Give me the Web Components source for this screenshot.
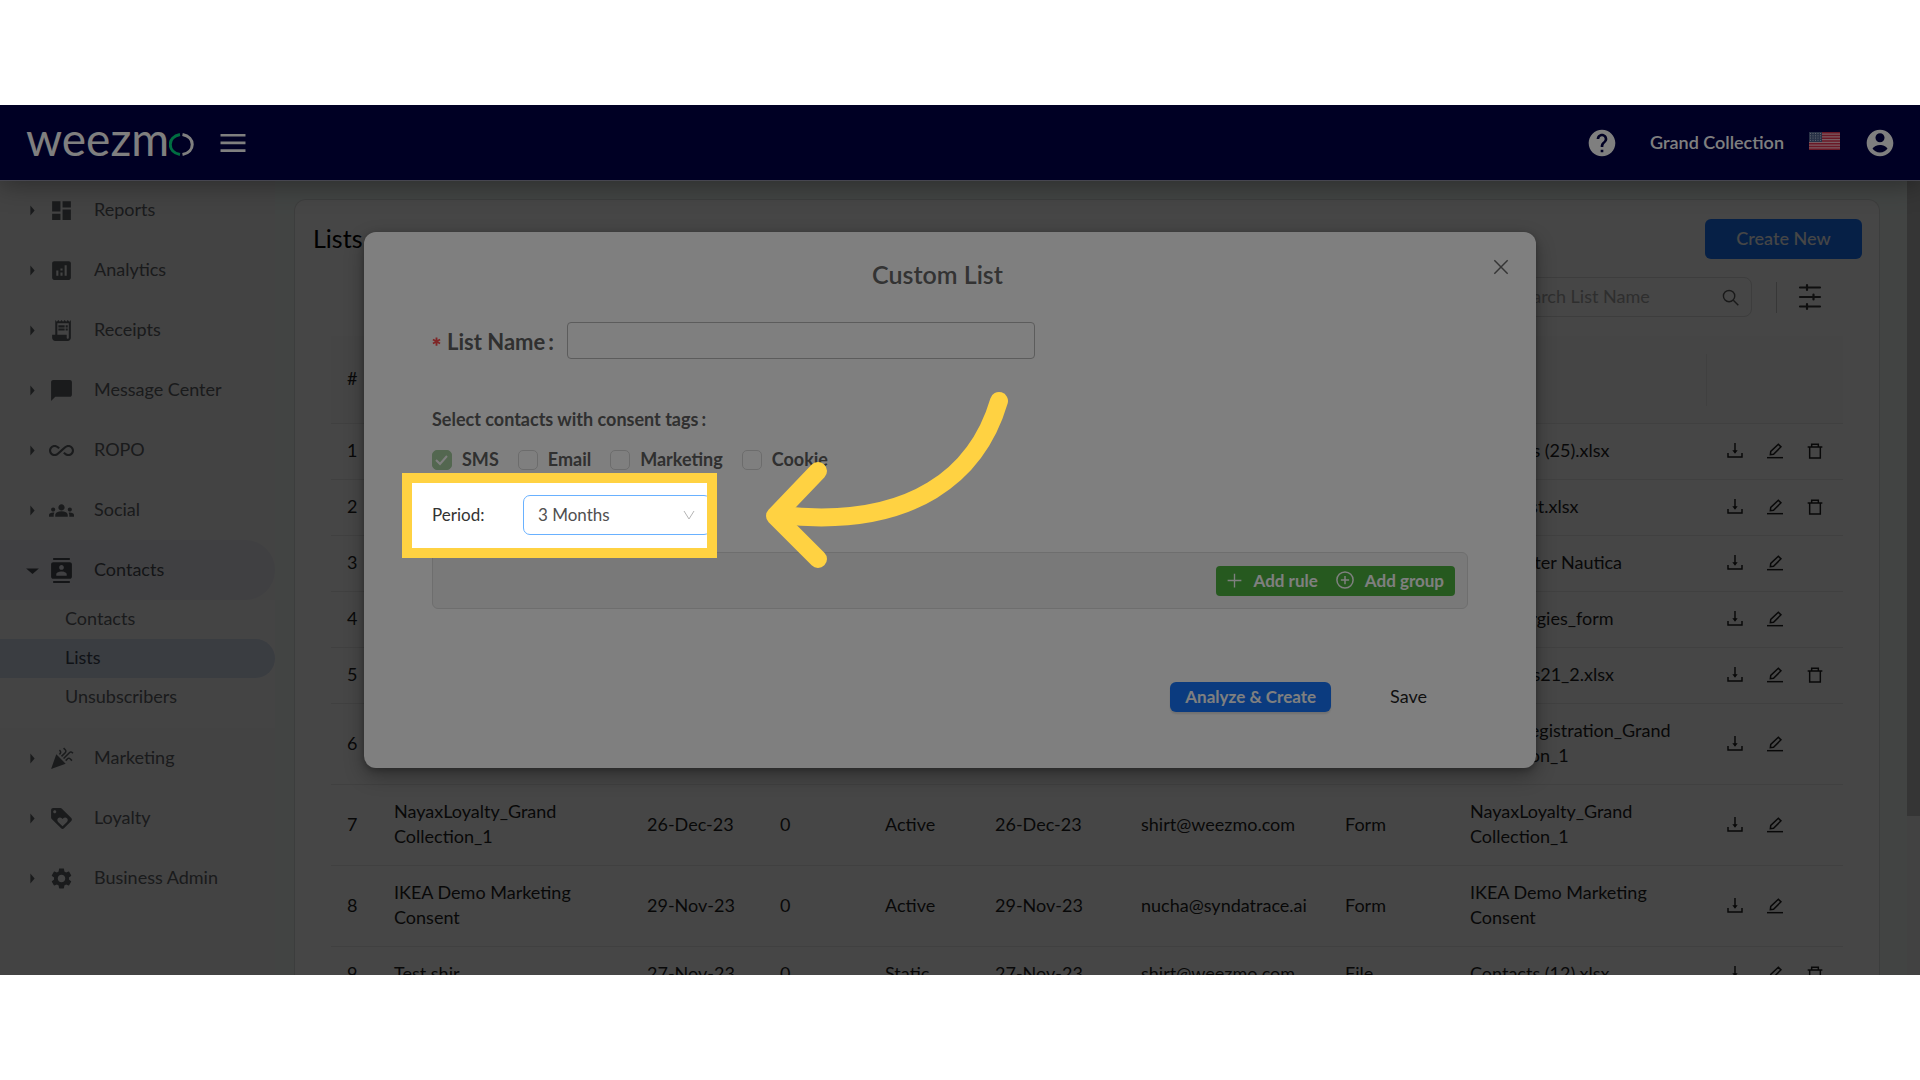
<!DOCTYPE html>
<html lang="en">
<head>
<meta charset="utf-8">
<title>weezmo – Lists</title>
<style>
  html, body { margin: 0; height: 100%; background: #fff; }
  body {
    box-sizing: border-box; padding-block: 105px; overflow: hidden;
    font-family: Lato, "Liberation Sans", sans-serif; font-size: 18px; line-height: 25px; color: #1f1f1f;
  }
</style>
</head>
<body>
<weezmo-app></weezmo-app>

<script>
const ICONS = {
  dashboard: '<path d="M3 13h8V3H3v10zm0 8h8v-6H3v6zm10 0h8V11h-8v10zm0-18v6h8V3h-8z"/>',
  analytics: '<path d="M19 3H5c-1.1 0-2 .9-2 2v14c0 1.1.9 2 2 2h14c1.1 0 2-.9 2-2V5c0-1.1-.9-2-2-2zM9 17H7v-5h2v5zm4 0h-2v-3h2v3zm0-5h-2v-2h2v2zm4 5h-2V7h2v10z"/>',
  receipt: '<path d="M19.5 3.5L18 2l-1.5 1.5L15 2l-1.5 1.5L12 2l-1.5 1.5L9 2 7.5 3.5 6 2v14H3v3c0 1.66 1.34 3 3 3h12c1.66 0 3-1.34 3-3V2l-1.5 1.5zM19 19c0 .55-.45 1-1 1s-1-.45-1-1v-3H8V5h11v14z"/><path d="M9 7h6v2H9zM16 7h2v2h-2zM9 10h6v2H9zM16 10h2v2h-2z"/>',
  chat: '<path d="M20 2H4c-1.1 0-2 .9-2 2v18l4-4h14c1.1 0 2-.9 2-2V4c0-1.1-.9-2-2-2z"/>',
  infinity: '<path d="M18.6 6.62c-1.44 0-2.8.56-3.77 1.53L12 10.66 10.48 12h.01L7.8 14.39c-.64.64-1.49.99-2.4.99-1.87 0-3.39-1.51-3.39-3.38S3.53 8.62 5.4 8.62c.91 0 1.76.35 2.44 1.03l1.13 1 1.51-1.34L9.22 8.2C8.2 7.18 6.84 6.62 5.4 6.62 2.42 6.62 0 9.04 0 12s2.42 5.38 5.4 5.38c1.44 0 2.8-.56 3.77-1.53l2.83-2.5.01.01L13.52 12h-.01l2.69-2.39c.64-.64 1.49-.99 2.4-.99 1.87 0 3.39 1.51 3.39 3.38s-1.52 3.38-3.39 3.38c-.9 0-1.76-.35-2.44-1.03l-1.14-1.01-1.51 1.34 1.27 1.12c1.02 1.01 2.37 1.57 3.82 1.57 2.98 0 5.4-2.41 5.4-5.38s-2.42-5.37-5.4-5.37z"/>',
  groups: '<path d="M12 12.75c1.63 0 3.07.39 4.24.9 1.08.48 1.76 1.56 1.76 2.73V18H6v-1.61c0-1.18.68-2.26 1.76-2.73 1.17-.52 2.61-.91 4.24-.91zM4 13c1.1 0 2-.9 2-2s-.9-2-2-2-2 .9-2 2 .9 2 2 2zm1.13 1.1c-.37-.06-.74-.1-1.13-.1-.99 0-1.93.21-2.78.58C.48 14.9 0 15.62 0 16.43V18h4.5v-1.61c0-.83.23-1.61.63-2.29zM20 13c1.1 0 2-.9 2-2s-.9-2-2-2-2 .9-2 2 .9 2 2 2zm4 3.43c0-.81-.48-1.53-1.22-1.85-.85-.37-1.79-.58-2.78-.58-.39 0-.76.04-1.13.1.4.68.63 1.46.63 2.29V18H24v-1.57zM12 6c1.66 0 3 1.34 3 3s-1.34 3-3 3-3-1.34-3-3 1.34-3 3-3z"/>',
  contacts: '<path d="M20 0H4v2h16V0zM4 24h16v-2H4v2zM20 4H4c-1.1 0-2 .9-2 2v12c0 1.1.9 2 2 2h16c1.1 0 2-.9 2-2V6c0-1.1-.9-2-2-2zm-8 2.75c1.24 0 2.25 1.01 2.25 2.25s-1.01 2.25-2.25 2.25S9.75 10.24 9.75 9 10.76 6.75 12 6.75zM17 17H7v-1.5c0-1.67 3.33-2.5 5-2.5s5 .83 5 2.5V17z"/>',
  celebration: '<path d="M2 22l14-5-9-9zM14.53 12.53l5.59-5.59c.49-.49 1.28-.49 1.77 0l.59.59 1.06-1.06-.59-.59c-1.07-1.07-2.82-1.07-3.89 0l-5.59 5.59 1.06 1.06zM10.06 6.88l-.59.59 1.06 1.06.59-.59c1.07-1.07 1.07-2.82 0-3.89l-.59-.59-1.06 1.07.59.59c.48.48.48 1.28 0 1.76zM17.06 11.88l-1.59 1.59 1.06 1.06 1.59-1.59c.49-.49 1.28-.49 1.77 0l1.61 1.61 1.06-1.06-1.61-1.61c-1.08-1.07-2.82-1.07-3.89 0zM15.06 5.88l-3.59 3.59 1.06 1.06 3.59-3.59c1.07-1.07 1.07-2.82 0-3.89l-1.59-1.59-1.06 1.06 1.59 1.59c.48.49.48 1.29 0 1.77z"/>',
  loyalty: '<path d="M21.41 11.58l-9-9C12.05 2.22 11.55 2 11 2H4c-1.1 0-2 .9-2 2v7c0 .55.22 1.05.59 1.42l9 9c.36.36.86.58 1.41.58.55 0 1.05-.22 1.41-.59l7-7c.37-.36.59-.86.59-1.41 0-.55-.23-1.06-.59-1.42zM5.5 7C4.67 7 4 6.33 4 5.5S4.67 4 5.5 4 7 4.67 7 5.5 6.33 7 5.5 7zm11.77 8.27L13 19.54l-4.27-4.27C8.28 14.81 8 14.19 8 13.5c0-1.38 1.12-2.5 2.5-2.5.69 0 1.32.28 1.77.74l.73.72.73-.73c.45-.45 1.08-.73 1.77-.73 1.38 0 2.5 1.12 2.5 2.5 0 .69-.28 1.32-.73 1.77z"/>',
  settings: '<path d="M19.14 12.94c.04-.3.06-.61.06-.94 0-.32-.02-.64-.07-.94l2.03-1.58c.18-.14.23-.41.12-.61l-1.92-3.32c-.12-.22-.37-.29-.59-.22l-2.39.96c-.5-.38-1.03-.7-1.62-.94l-.36-2.54c-.04-.24-.24-.41-.48-.41h-3.84c-.24 0-.43.17-.47.41l-.36 2.54c-.59.24-1.13.57-1.62.94l-2.39-.96c-.22-.08-.47 0-.59.22L2.74 8.87c-.12.21-.08.47.12.61l2.03 1.58c-.05.3-.09.63-.09.94s.02.64.07.94l-2.03 1.58c-.18.14-.23.41-.12.61l1.92 3.32c.12.22.37.29.59.22l2.39-.96c.5.38 1.03.7 1.62.94l.36 2.54c.05.24.24.41.48.41h3.84c.24 0 .44-.17.47-.41l.36-2.54c.59-.24 1.13-.56 1.62-.94l2.39.96c.22.08.47 0 .59-.22l1.92-3.32c.12-.22.07-.47-.12-.61l-2.01-1.58zM12 15.6c-1.98 0-3.6-1.62-3.6-3.6s1.62-3.6 3.6-3.6 3.6 1.62 3.6 3.6-1.62 3.6-3.6 3.6z"/>',
  help: '<path d="M12 2C6.48 2 2 6.48 2 12s4.48 10 10 10 10-4.48 10-10S17.52 2 12 2zm1 17h-2v-2h2v2zm2.07-7.75l-.9.92C13.45 12.9 13 13.5 13 15h-2v-.5c0-1.1.45-2.1 1.17-2.83l1.24-1.26c.37-.36.59-.86.59-1.41 0-1.1-.9-2-2-2s-2 .9-2 2H8c0-2.21 1.79-4 4-4s4 1.79 4 4c0 .88-.36 1.68-.93 2.25z"/>',
  account: '<path d="M12 2C6.48 2 2 6.48 2 12s4.48 10 10 10 10-4.48 10-10S17.52 2 12 2zm0 2.6c1.9 0 3.4 1.5 3.4 3.4s-1.5 3.4-3.4 3.4S8.6 9.9 8.6 8s1.5-3.4 3.4-3.4zm0 14.6c-2.5 0-4.700-1.300-5.600-3 .800-1.500 3.400-2.700 5.600-2.700s4.800 1.200 5.600 2.700c-.900 1.700-3.100 3-5.600 3z"/>',
  menu: '<path d="M1.300 4.200h21.400v2.300H1.300zM1.300 10.800h21.400v2.300H1.300zM1.300 17.400h21.400v2.300H1.300z"/>',
  caret: '<path d="M9 5l6 7-6 7z"/>',
  caretDown: '<path d="M3 9h18l-9 8z"/>',
  download: '<g fill="none" stroke="currentColor" stroke-width="2.200"><path d="M1.500 15v6h21v-6"/><path d="M12 0v14"/></g><path d="M8 11h8l-4 5z"/>',
  edit: '<g fill="none" stroke="currentColor" stroke-width="2.200"><path d="M0 22h24"/><path d="M5 17.500l.600-4.800L17 1.800l4 4-11.200 11z"/></g>',
  trash: '<g fill="none" stroke="currentColor" stroke-width="2.200"><path d="M1 6h22M7 5.500V2h10v3.500M4 6v16.500h16V6"/></g>',
  search: '<g fill="none" stroke="currentColor" stroke-width="2"><circle cx="10" cy="10" r="8"/><path d="M16 16l7 7"/></g>',
  filter: '<g fill="none" stroke="currentColor" stroke-width="2.200" stroke-linecap="round"><path d="M2 2.500h20M2 12h20M2 21.500h20"/><path d="M9 0v5M15.500 9.500v5M9 19v5"/></g>',
  close: '<path fill="none" stroke="currentColor" stroke-width="2.200" d="M2 2l20 20M22 2L2 22"/>',
  plus: '<path fill="none" stroke="currentColor" stroke-width="2.200" d="M12 1v22M1 12h22"/>',
  plusCircle: '<g fill="none" stroke="currentColor" stroke-width="2"><circle cx="12" cy="12" r="10.800"/><path d="M12 6.500v11M6.500 12h11"/></g>',
  chevron: '<path fill="none" stroke="currentColor" stroke-width="2" d="M2 4l10 16L22 4"/>',
  asterisk: '<path fill="none" stroke="currentColor" stroke-width="5" d="M12 1v22M2.500 6.500l19 11M21.500 6.500l-19 11"/>'
};

const define = (name, html, init) => customElements.define(name, class extends HTMLElement {
  constructor() {
    super();
    const root = this.attachShadow({ mode: 'open' });
    const t = document.createElement('template');
    t.innerHTML = html;
    root.append(t.content.cloneNode(true));
  }
  connectedCallback() { if (init) init(this, this.shadowRoot); }
});

define('app-icon', `
<style>
  :host { display: inline-flex; flex: none; width: var(--size, 24px); height: var(--size, 24px); }
  svg { width: 100%; height: 100%; display: block; fill: currentColor; overflow: visible; }
</style>
<svg viewBox="0 0 24 24" aria-hidden="true"></svg>`,
(el, root) => { root.querySelector('svg').innerHTML = ICONS[el.getAttribute('name')] || ''; });

define('weezmo-logo', `
<style>
  :host { display: flex; align-items: baseline; color: #fff; font-size: 46px; line-height: 44px; }
  svg { width: 25px; height: 23px; flex: none; }
</style>
<span>weezm</span><svg viewBox="0 0 25 23" fill="none" stroke-width="3" aria-label="o" role="img">
  <path stroke="#00dc82" d="M11 1.500C-2 4 -2 19 11 21.500"/>
  <path stroke="#fff" d="M13.500 1.500C26.500 4 26.500 19 13.500 21.500"/>
</svg>`);

define('us-flag', `
<style>:host { display: block; width: 31px; height: 18px; } svg { display: block; width: 100%; height: 100%; }</style>
<svg viewBox="0 0 31 18" role="img" aria-label="English (US)">
  <rect width="31" height="18" fill="#f3b9c4"/>
  <path stroke="#d5304c" stroke-width="1.400" d="M0 .7h31M0 3.460h31M0 6.230h31M0 9h31M0 11.770h31M0 14.540h31M0 17.300h31"/>
  <rect width="13" height="10" fill="#51648e"/>
  <path stroke="#c5cde0" stroke-width="1" stroke-dasharray="1 1.500" d="M1 1.500h12M1 3.800h12M1 6.100h12M1 8.400h12"/>
</svg>`);

define('app-header', `
<style>
  :host { display: flex; align-items: center; box-sizing: border-box; height: 76px; padding: 0 24px 0 26px;
    background: #000048; color: #fff; border-bottom: 1px solid #8c8ca0; box-shadow: 0 4px 24px rgba(0,0,0,.35); }
  button { display: flex; padding: 0; border: 0; background: none; color: inherit; }
  weezmo-logo { margin: 0 25px 8px 0; }
  .menu { --size: 28px; }
  .right { display: flex; align-items: center; margin-left: auto; }
  .help, .user { --size: 32px; }
  .name { font-weight: 600; margin: 0 25px 0 32px; }
  us-flag { margin: 0 24px 4px 0; }
</style>
<weezmo-logo></weezmo-logo>
<button class="menu" aria-label="Toggle menu"><app-icon name="menu"></app-icon></button>
<div class="right">
  <button class="help" aria-label="Help"><app-icon name="help"></app-icon></button>
  <span class="name">Grand Collection</span>
  <us-flag></us-flag>
  <button class="user" aria-label="Account"><app-icon name="account"></app-icon></button>
</div>`);

define('nav-item', `
<style>
  :host { display: block; color: #5f6368; }
  a { display: flex; align-items: center; height: 60px; padding-left: 24px; color: inherit; text-decoration: none; border-radius: 0 30px 30px 0; }
  :host([open]) a { background: #e9ebf2; color: #4c4f54; }
  .arrow { --size: 17px; margin-right: 8px; }
  .icon { --size: 25px; margin-right: 20px; }
  .text { padding-bottom: 2px; }
</style>
<a href="#"><app-icon class="arrow"></app-icon><app-icon class="icon"></app-icon><span class="text"><slot></slot></span></a>`,
(el, root) => {
  const set = (sel, name) => {
    const i = document.createElement('app-icon');
    i.className = sel; i.setAttribute('name', name);
    root.querySelector('.' + sel).replaceWith(i);
  };
  set('arrow', el.hasAttribute('open') ? 'caretDown' : 'caret');
  set('icon', el.getAttribute('icon'));
});

define('nav-subitem', `
<style>
  :host { display: block; color: #5f6368; }
  a { display: block; line-height: 37px; padding: 0 0 2px 65px; color: inherit; text-decoration: none; border-radius: 0 20px 20px 0; }
  :host([current]) a { background: #d3deef; color: #3c4654; }
</style>
<a href="#"><slot></slot></a>`);

define('side-nav', `
<style>
  :host { display: block; flex: none; width: 275px; background: #f5f5f5; }
  .sub { background: #fafafa; padding-bottom: 11px; }
</style>
<nav>
  <nav-item icon="dashboard">Reports</nav-item>
  <nav-item icon="analytics">Analytics</nav-item>
  <nav-item icon="receipt">Receipts</nav-item>
  <nav-item icon="chat">Message Center</nav-item>
  <nav-item icon="infinity">ROPO</nav-item>
  <nav-item icon="groups">Social</nav-item>
  <nav-item icon="contacts" open>Contacts</nav-item>
  <div class="sub">
    <nav-subitem>Contacts</nav-subitem>
    <nav-subitem current>Lists</nav-subitem>
    <nav-subitem>Unsubscribers</nav-subitem>
  </div>
  <nav-item icon="celebration">Marketing</nav-item>
  <nav-item icon="loyalty">Loyalty</nav-item>
  <nav-item icon="settings">Business Admin</nav-item>
</nav>`);

const ROWS = [
  ['1', '', '', '', '', '', '', '', 'Contacts (25).xlsx', true],
  ['2', '', '', '', '', '', '', '', 'Guest list.xlsx', true],
  ['3', '', '', '', '', '', '', '', 'Newsletter Nautica', false],
  ['4', '', '', '', '', '', '', '', 'Pet Allergies_form', false],
  ['5', '', '', '', '', '', '', '', 'Contacts21_2.xlsx', true],
  ['6', '', '', '', '', '', '', '', 'NayaxRegistration_Grand Collection_1', false],
  ['7', 'NayaxLoyalty_Grand Collection_1', '26-Dec-23', '0', 'Active', '26-Dec-23', 'shirt@weezmo.com', 'Form', 'NayaxLoyalty_Grand Collection_1', false],
  ['8', 'IKEA Demo Marketing Consent', '29-Nov-23', '0', 'Active', '29-Nov-23', 'nucha@syndatrace.ai', 'Form', 'IKEA Demo Marketing Consent', false],
  ['9', 'Test shir', '27-Nov-23', '0', 'Static', '27-Nov-23', 'shirt@weezmo.com', 'File', 'Contacts (12).xlsx', true]
];

define('lists-table', `
<style>
  :host { display: block; }
  table { width: 100%; table-layout: fixed; border-collapse: separate; border-spacing: 0; }
  th, td { text-align: left; padding: 14px 16px 16px; border-bottom: 1px solid #ebebeb; font-weight: 400; }
  th { height: 57px; background: #fbfbfb; }
  th:first-child, td:first-child { padding-inline: 16px 4px; }
  th.file { background: linear-gradient(#ececec, #ececec) right center / 1px 52px no-repeat #fbfbfb; }
  .acts { display: flex; gap: 24px; padding: 5px 0 0 4px; height: 20px; --size: 16px; }
  button { display: flex; padding: 0; border: 0; background: none; color: #1f1f1f; }
</style>
<table>
  <colgroup><col style="width:47px"><col><col style="width:133px"><col style="width:105px"><col style="width:110px"><col style="width:146px"><col style="width:204px"><col style="width:125px"><col><col style="width:136px"></colgroup>
  <thead><tr><th>#</th><th></th><th></th><th></th><th></th><th></th><th></th><th></th><th class="file"></th><th></th></tr></thead>
  <tbody></tbody>
</table>`,
(el, root) => {
  const act = (label, icon) => `<button aria-label="${label}"><app-icon name="${icon}"></app-icon></button>`;
  root.querySelector('tbody').innerHTML = ROWS.map(r =>
    '<tr>' + r.slice(0, 9).map(c => `<td>${c}</td>`).join('') +
    `<td><div class="acts">${act('Download', 'download')}${act('Edit', 'edit')}${r[9] ? act('Delete', 'trash') : ''}</div></td></tr>`).join('');
});

define('lists-panel', `
<style>
  :host { display: block; box-sizing: border-box; background: #fff; border: 1px solid #dcdfde; border-bottom: 0; border-radius: 12px 12px 0 0; padding: 19px 17px 0 18px; }
  .head { display: flex; justify-content: space-between; align-items: center; }
  h1 { margin: 0; padding-bottom: 2px; font-size: 25px; line-height: 32px; font-weight: 400; color: #000; }
  .create { width: 157px; height: 40px; padding: 0 0 2px; border: 0; border-radius: 6px; background: #1677ff; color: #fff; font: inherit; font-weight: 500; }
  .tools { display: flex; align-items: center; justify-content: flex-end; margin: 18px 40px 19px 0; }
  .search { display: flex; align-items: center; box-sizing: border-box; width: 256px; height: 40px; padding: 0 12px 0 16px; border: 1px solid #dedede; border-radius: 8px; }
  input { flex: 1; min-width: 0; border: 0; padding: 0 0 2px; background: none; font: inherit; color: inherit; outline: 0; }
  input::placeholder { color: #aaa; opacity: 1; }
  .search app-icon { --size: 17px; color: #5c5c5c; }
  .line { width: 1px; height: 31px; background: #c8c8c8; margin: 0 21px 0 24px; }
  .filter { display: flex; padding: 0; border: 0; background: none; color: #3a3a3a; --size: 24px; }
  lists-table { margin: 0 19px 0 18px; }
</style>
<div class="head"><h1>Lists</h1><button class="create">Create New</button></div>
<div class="tools">
  <div class="search"><input type="text" placeholder="Search List Name" aria-label="Search List Name"><app-icon name="search"></app-icon></div>
  <span class="line"></span>
  <button class="filter" aria-label="Filters"><app-icon name="filter"></app-icon></button>
</div>
<lists-table></lists-table>`);

define('tag-check', `
<style>
  :host { display: block; font-weight: 700; }
  label { display: flex; align-items: center; gap: 10px; }
  input { appearance: none; box-sizing: border-box; width: 20px; height: 20px; margin: 0; border: 1px solid #d9d9d9; border-radius: 5px; background: #fff; }
  input:checked { border-color: #a6cfa0; background: #a6cfa0 url("data:image/svg+xml,%3Csvg xmlns='http://www.w3.org/2000/svg' viewBox='0 0 20 20' fill='none' stroke='white' stroke-width='2'%3E%3Cpath d='M4 10l4 4 7-8'/%3E%3C/svg%3E") center / 20px no-repeat; }
</style>
<label><input type="checkbox"><slot></slot></label>`,
(el, root) => { root.querySelector('input').checked = el.hasAttribute('checked'); });

define('custom-list-dialog', `
<style>
  :host { display: block; box-sizing: border-box; background: #fff; border-radius: 12px; padding: 24px 26px 55px 68px;
    box-shadow: 0 8px 20px rgba(0,0,0,.3), 0 2px 6px rgba(0,0,0,.25); color: #666; }
  .top { display: flex; align-items: flex-start; }
  h2 { flex: 1; margin: 0 16px 0 0; padding: 2px 34px 1px 0; text-align: center; font-size: 25px; line-height: 32px; font-weight: 600; }
  button { border: 0; font: inherit; }
  .close { display: flex; padding: 3px 0 2px; margin-right: 1px; background: none; color: #6a6a6a; --size: 16px; }
  .body { padding-right: 42px; }
  .name { display: flex; align-items: center; margin-top: 31px; font-size: 22px; font-weight: 700; }
  .name label { display: flex; align-items: center; gap: 6px; width: 135px; padding-top: 2px; white-space: nowrap; color: #606060; }
  .colon { margin-left: 3px; }
  .star { --size: 9px; color: #ff4d4f; }
  .name input { box-sizing: border-box; width: 468px; height: 37px; border: 1px solid #b8b8b8; border-radius: 4px; background: #fff; }
  .tags { margin-top: 48px; font-weight: 700; color: #606060; }
  .checks { display: flex; gap: 19px; margin-top: 15px; color: #606060; }
  .period { display: flex; align-items: center; margin-top: 23px; font-size: 17px; }
  .period label { width: 91px; padding-bottom: 2px; color: #333; }
  .select { display: grid; width: 188px; }
  .select > * { grid-area: 1 / 1; }
  select { appearance: none; height: 40px; padding: 0 14px 2px; border: 1px solid #69b1ff; border-radius: 7px; background: #fff; font: inherit; color: #505050; outline: 0; }
  .select app-icon { --size: 12px; color: #b5b5b5; place-self: center end; margin-right: 16px; pointer-events: none; }
  .rules { display: flex; justify-content: flex-end; box-sizing: border-box; height: 57px; margin-top: 17px; padding: 13px 12px 0 0; border: 1px solid #dcdcdc; border-radius: 6px; background: #f3f3f3; }
  .rules button { display: flex; align-items: center; height: 30px; background: #4cb33f; color: #fff; font-size: 17px; font-weight: 700; }
  .rules .add { padding: 0 9px 2px 11px; gap: 12px; border-radius: 4px 0 0 4px; --size: 15px; }
  .rules .grp { padding: 0 11px 2px 9px; gap: 11px; border-radius: 0 4px 4px 0; --size: 18px; }
  .foot { display: flex; justify-content: flex-end; margin-top: 73px; padding: 0 26px 1px 0; }
  .foot button { height: 30px; padding: 0 15px 2px; }
  .primary { border-radius: 6px; background: #1677ff; color: #fff; font-size: 17px; font-weight: 700; box-shadow: 0 2px 2px rgba(0,0,0,.12); }
  .save { margin-left: 44px; background: none; color: #1f1f1f; }
</style>
<div class="top"><h2>Custom List</h2><button class="close" aria-label="Close"><app-icon name="close"></app-icon></button></div>
<div class="body">
  <div class="name"><label for="ln"><app-icon class="star" name="asterisk"></app-icon><span>List Name<span class="colon">:</span></span></label><input id="ln" type="text"></div>
  <div class="tags">Select contacts with consent tags<span class="colon">:</span></div>
  <div class="checks"><tag-check checked>SMS</tag-check><tag-check>Email</tag-check><tag-check>Marketing</tag-check><tag-check>Cookie</tag-check></div>
  <div class="period"><label for="period">Period:</label>
    <div class="select"><select id="period"><option>3 Months</option></select><app-icon name="chevron"></app-icon></div></div>
  <div class="rules"><button class="add"><app-icon name="plus"></app-icon>Add rule</button><button class="grp"><app-icon name="plusCircle"></app-icon>Add group</button></div>
  <div class="foot"><button class="primary">Analyze &amp; Create</button><button class="save">Save</button></div>
</div>`);

define('tour-overlay', `
<style>
  :host { display: block; position: absolute; inset: 0; overflow: hidden; pointer-events: none; }
  .spot { position: absolute; left: 402px; top: 368px; box-sizing: border-box; width: 315px; height: 85px; border: 10px solid #ffd242; box-shadow: 0 0 0 2400px rgba(0,0,0,.5); }
  svg { position: absolute; left: 755px; top: 277px; width: 265px; height: 200px; }
</style>
<div class="spot"></div>
<svg viewBox="755 382 265 200" fill="none" stroke="#ffd242" stroke-width="18" stroke-linecap="round" stroke-linejoin="round" aria-hidden="true">
  <path d="M999 401C978 472 915 530 780 515"/><path d="M818 471L775 516L818 559"/>
</svg>`);

define('weezmo-app', `
<style>
  :host { display: flex; flex-direction: column; position: relative; height: 100%; overflow: hidden; background: #f0f9f6; }
  app-header { position: relative; z-index: 2; flex: none; }
  .main { display: flex; flex: 1; min-height: 0; position: relative; margin-top: -1px; }
  lists-panel { flex: 1; min-width: 0; margin: 19px 27px 0 19px; }
  .scroll { width: 13px; background: #f1f1f1; }
  .thumb { height: 80%; background: #c1c1c1; }
  .mask { position: absolute; inset: 0; padding: 52px 20% 0 364px; background: rgba(0,0,0,.45); }
  tour-overlay { z-index: 3; }
</style>
<app-header></app-header>
<div class="main">
  <side-nav></side-nav>
  <lists-panel></lists-panel>
  <div class="scroll"><div class="thumb"></div></div>
  <div class="mask"><custom-list-dialog role="dialog" aria-label="Custom List"></custom-list-dialog></div>
</div>
<tour-overlay></tour-overlay>`);
</script>
</body>
</html>
